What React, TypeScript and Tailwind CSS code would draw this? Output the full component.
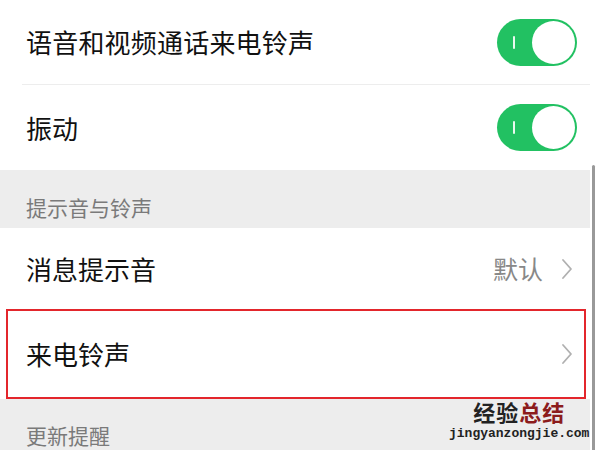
import React from 'react';

const Toggle: React.FC = () => (
  <div className="relative w-[80px] h-[47px] rounded-full bg-[#22c162] flex items-center justify-end pr-[2px]">
    <span className="absolute left-[16px] top-[17px] w-[2px] h-[13px] bg-white/90 rounded-full" />
    <span className="w-[43px] h-[43px] rounded-full bg-white" />
  </div>
);

const Chevron: React.FC = () => (
  <svg width="12" height="22" viewBox="0 0 12 22" fill="none">
    <path d="M2 2 L10 11 L2 20" stroke="#b0b0b0" strokeWidth="1.8" strokeLinecap="round" strokeLinejoin="round" />
  </svg>
);

export default function App() {
  return (
    <div
      className="relative w-[600px] h-[450px] overflow-hidden bg-white flex"
      style={{ fontFamily: '"Noto Sans CJK SC", "Noto Sans", sans-serif' }}
    >
      <div className="w-[590px] flex flex-col">
        {/* switches */}
        <div className="h-[84px] shrink-0 flex items-center justify-between pl-[26px] pr-[13px]">
          <span className="text-[26px] leading-none tracking-[0.2px] text-[#111]">语音和视频通话来电铃声</span>
          <Toggle />
        </div>
        <div className="ml-[22px] h-px bg-[#ededed] shrink-0" />
        <div className="h-[85px] shrink-0 flex items-center justify-between pl-[26px] pr-[13px]">
          <span className="text-[26px] leading-none text-[#111]">振动</span>
          <Toggle />
        </div>

        {/* section header */}
        <div className="h-[58px] shrink-0 bg-[#ededed] flex items-center pl-[26px] pt-[16px]">
          <span className="text-[21px] leading-none text-[#7a7a7a]">提示音与铃声</span>
        </div>

        <div className="h-[81px] shrink-0 flex items-center justify-between pl-[26px] pr-[17px]">
          <span className="text-[26px] leading-none text-[#111]">消息提示音</span>
          <div className="flex items-center gap-[18px]">
            <span className="text-[25px] leading-none text-[#888]">默认</span>
            <Chevron />
          </div>
        </div>

        {/* highlighted row */}
        <div className="h-[90px] shrink-0 pl-[6px] pr-[4px]">
          <div className="h-full border-2 border-[#e3262c] flex items-center justify-between pl-[18px] pr-[11px]">
            <span className="text-[26px] leading-none text-[#111]">来电铃声</span>
            <Chevron />
          </div>
        </div>

        <div className="flex-1 bg-[#ededed] pl-[26px] pt-[26px]">
          <span className="text-[21px] leading-none text-[#7a7a7a]">更新提醒</span>
        </div>
      </div>

      {/* scrollbar strip */}
      <div className="flex-1 relative">
        <div className="absolute left-[2px] top-[165px] bottom-0 w-[3px] bg-[#999] rounded-t-full" />
      </div>

      {/* watermark */}
      <div className="absolute left-[449px] top-[400px] flex flex-col items-center">
        <div className="text-[22px] leading-none font-bold tracking-[1px]">
          <span className="text-[#222]">经验</span>
          <span className="text-[#8c1c1c]">总结</span>
        </div>
        <div
          className="mt-[5px] text-[13px] leading-none font-bold text-[#222]"
          style={{ fontFamily: '"Liberation Mono", monospace' }}
        >
          jingyanzongjie.com
        </div>
      </div>
    </div>
  );
}
